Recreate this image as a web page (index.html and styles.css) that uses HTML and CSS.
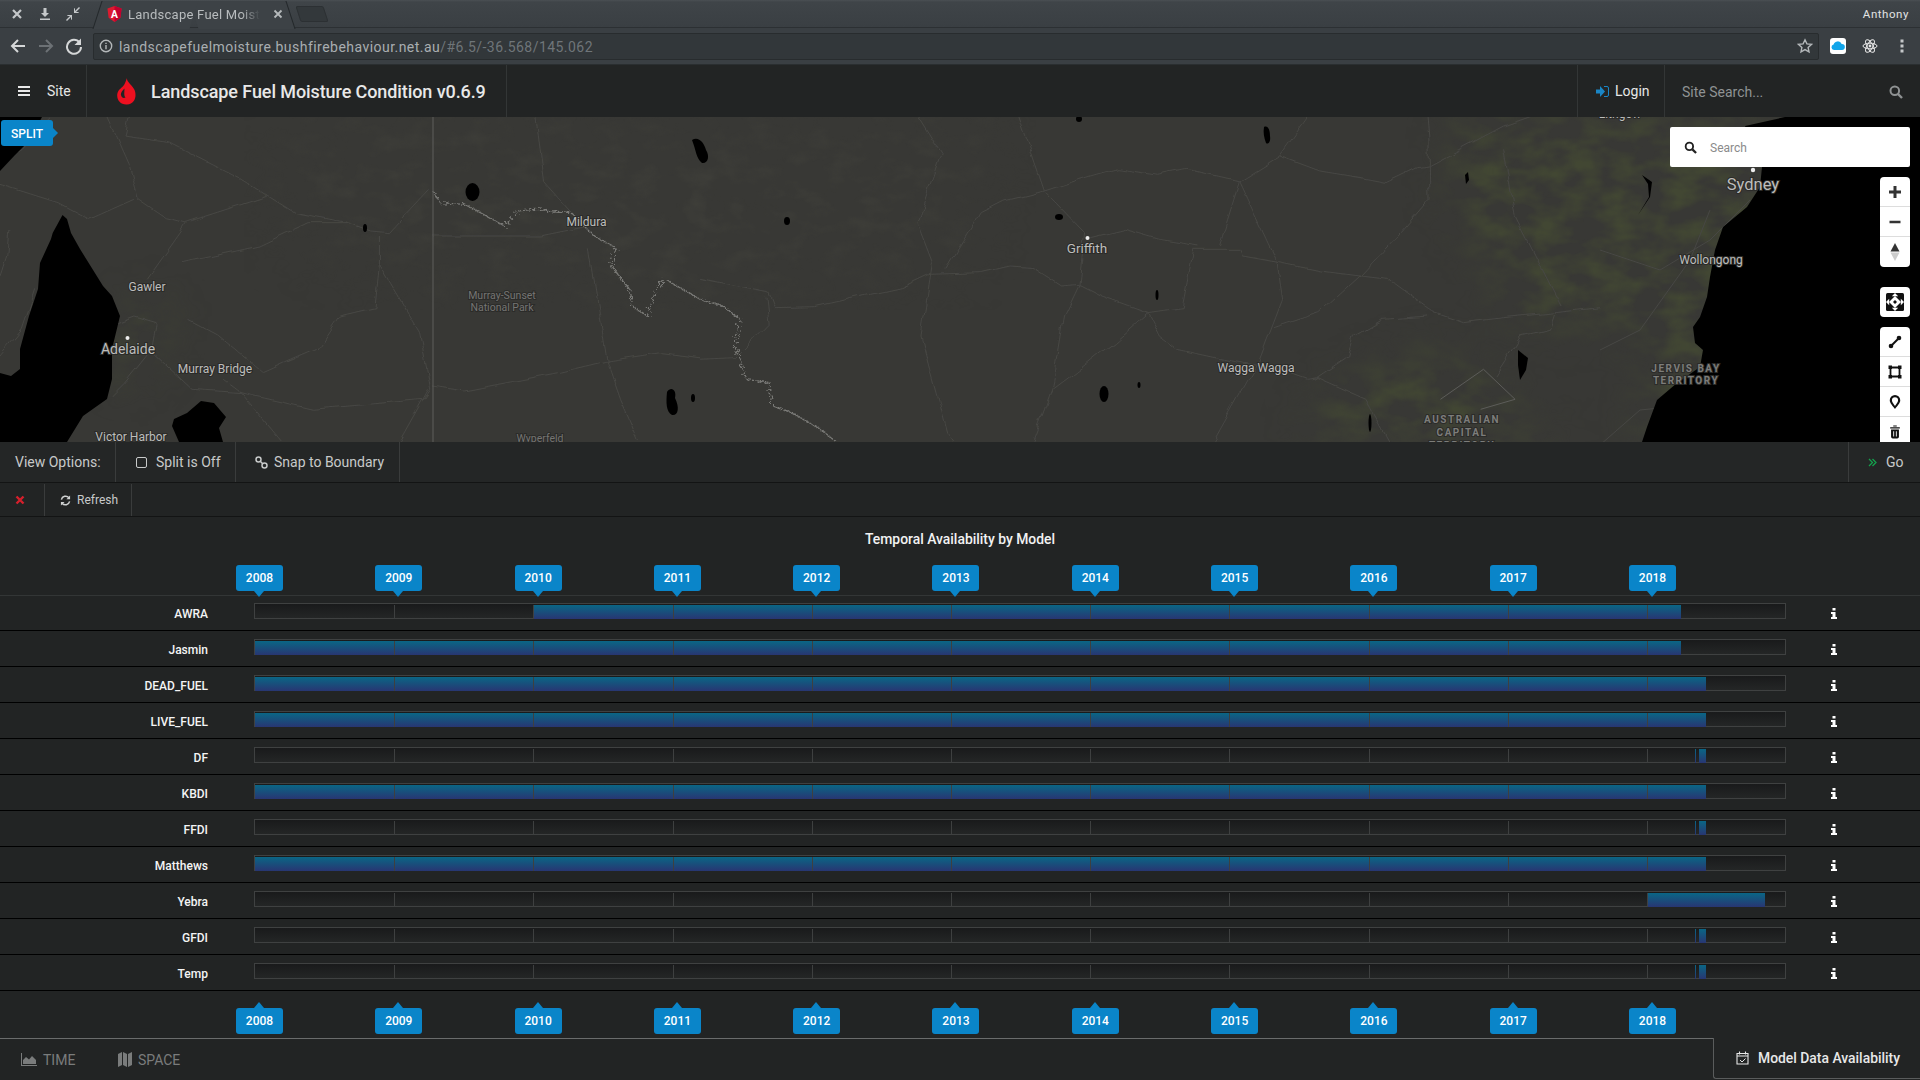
FILE: index.html
```html
<!DOCTYPE html>
<html lang="en">
<head>
<meta charset="utf-8">
<title>Landscape Fuel Moisture Condition</title>
<link rel="stylesheet" href="styles.css">
</head>
<body>
<div class="tabstrip">
  <div class="win-btns">
    <svg class="ico16" viewBox="0 0 16 16"><path d="M4 4l8 8M12 4l-8 8" stroke="#c4c7c9" stroke-width="2.2" fill="none"/></svg>
    <svg class="ico16" viewBox="0 0 16 16"><path d="M6.500 2h3v5H12l-4 4-4-4h2.500zM3 12.500h10V14H3z" fill="#c4c7c9"/></svg>
    <svg class="ico16" viewBox="0 0 16 16"><path d="M14 1L10 5V2.800L9 2v5h5l-.8-1H11l4-4zM2 15l4-4v2.200l1 .8V9H2l.8 1H5l-4 4z" fill="#c4c7c9"/></svg>
  </div>
  <div class="tab">
    <svg class="fav" viewBox="0 0 16 17"><path d="M8 0l7.500 2.600-1.200 10L8 17l-6.300-4.400-1.200-10z" fill="#dd1b2f"/><path d="M8 0l7.500 2.600-1.200 10L8 17z" fill="#c3002f"/><text x="8" y="12.500" text-anchor="middle" class="fav-a">A</text></svg>
    <span class="tab-title">Landscape Fuel Moist</span>
    <svg class="tab-x" viewBox="0 0 10 10"><path d="M1.500 1.500l7 7M8.500 1.500l-7 7" stroke="#b5b9bb" stroke-width="1.800" fill="none"/></svg>
  </div>
  <div class="newtab"></div>
  <span class="user">Anthony</span>
</div>
<div class="toolbar">
  <svg class="nav-ico" viewBox="0 0 18 18"><path d="M16 9H3M9 3L3 9l6 6" stroke="#d5d7d8" stroke-width="2" fill="none"/></svg>
  <svg class="nav-ico dim" viewBox="0 0 18 18"><path d="M2 9h13M9 3l6 6-6 6" stroke="#6c7175" stroke-width="2" fill="none"/></svg>
  <svg class="nav-ico" viewBox="0 0 18 18"><path d="M14.500 5.500A7 7 0 1 0 16 10" stroke="#d5d7d8" stroke-width="2" fill="none"/><path d="M16 1.500V8h-6.500z" fill="#d5d7d8"/></svg>
  <div class="omni">
    <svg class="info-c" viewBox="0 0 14 14"><circle cx="7" cy="7" r="5.700" stroke="#b4b8ba" stroke-width="1.400" fill="none"/><path d="M6.300 6h1.400v4.200H6.300zM6.300 3.700h1.400v1.400H6.300z" fill="#b4b8ba"/></svg>
    <span class="url">landscapefuelmoisture.bushfirebehaviour.net.au<span class="url-path">/#6.5/-36.568/145.062</span></span>
    <svg class="star" viewBox="0 0 16 16"><path d="M8 1.800l1.900 4.100 4.500.5-3.300 3 .9 4.400L8 11.600l-4 2.200.9-4.400-3.300-3 4.500-.5z" stroke="#b4b8ba" stroke-width="1.400" fill="none"/></svg>
  </div>
  <div class="ext ext-cloud"><svg viewBox="0 0 16 16"><path d="M4 12a2.800 2.800 0 0 1-.4-5.500A4.300 4.300 0 0 1 11.700 6 3 3 0 0 1 12 12z" fill="#11a5ea"/></svg></div>
  <svg class="ext ext-atom" viewBox="0 0 16 16"><g fill="none" stroke="#e8e8e8" stroke-width="1"><ellipse cx="8" cy="8" rx="7" ry="2.800"/><ellipse cx="8" cy="8" rx="7" ry="2.800" transform="rotate(60 8 8)"/><ellipse cx="8" cy="8" rx="7" ry="2.800" transform="rotate(120 8 8)"/></g><circle cx="8" cy="8" r="1.400" fill="#e8e8e8"/></svg>
  <svg class="ext ext-dots" viewBox="0 0 16 16"><path d="M6.500 1.500h3v3h-3zM6.500 6.500h3v3h-3zM6.500 11.500h3v3h-3z" fill="#c4c7c9"/></svg>
</div>

<header class="navbar">
  <div class="nav-site">
    <svg class="burger" viewBox="0 0 12 10"><path d="M0 0h12v2H0zM0 4h12v2H0zM0 8h12v2H0z" fill="#e8e8e8"/></svg>
    <span>Site</span>
  </div>
  <div class="brand">
    <svg class="flame" viewBox="0 0 20 27"><path fill-rule="evenodd" d="M10 0C9.500 4 14 6 17 11 20 16 19 26 10 26.500 3 27-1 21 .5 15 1.500 11 5 10 7 7 8.500 5 9 2 10 0zM7.500 10.500C5 13 3.500 15 4 17 4.500 19.500 6.500 20.500 8.500 19.500 6.500 17 7.500 14 7.500 10.500z" fill="#ee1020"/></svg>
    <span class="brand-title">Landscape Fuel Moisture Condition v0.6.9</span>
  </div>
  <div class="login">
    <svg class="login-ico" viewBox="0 0 13 11"><path d="M0 3.500h4V0l5 5.500-5 5.500V7.500H0z" fill="#1a86c6"/><path d="M8 .5h3a1.500 1.500 0 0 1 1.500 1.500v7A1.500 1.500 0 0 1 11 10.500H8" stroke="#1a86c6" fill="none"/></svg>
    <span>Login</span>
  </div>
  <div class="site-search">
    <span>Site Search...</span>
    <svg class="s-ico" viewBox="0 0 14 14"><circle cx="5.800" cy="5.800" r="4.300" fill="none" stroke="#8f9293" stroke-width="2"/><path d="M9 9l4 4" stroke="#8f9293" stroke-width="2.400"/></svg>
  </div>
</header>

<section class="map">
  <svg class="map-art" viewBox="0 0 1920 325" preserveAspectRatio="none">
    <defs>
      <filter id="veg" x="-10%" y="-10%" width="120%" height="120%" color-interpolation-filters="sRGB">
        <feGaussianBlur in="SourceAlpha" stdDeviation="22" result="b"/>
        <feTurbulence type="fractalNoise" baseFrequency=".03 .05" numOctaves="3" seed="4"/>
        <feColorMatrix values="0 0 0 0 .26  0 0 0 0 .28  0 0 0 0 .2  0 0 0 2.400 -.85" result="n"/>
        <feComposite in="n" in2="b" operator="in"/>
      </filter>
      <filter id="patch" x="-5%" y="-5%" width="110%" height="110%" color-interpolation-filters="sRGB">
        <feGaussianBlur in="SourceAlpha" stdDeviation="30" result="b"/>
        <feTurbulence type="fractalNoise" baseFrequency=".035 .06" numOctaves="3" seed="9"/>
        <feColorMatrix values="0 0 0 0 .245  0 0 0 0 .245  0 0 0 0 .225  0 0 0 2 -.9" result="n"/>
        <feComposite in="n" in2="b" operator="in"/>
      </filter>
      <filter id="wob" x="-3%" y="-3%" width="106%" height="106%">
        <feTurbulence type="fractalNoise" baseFrequency=".02" numOctaves="2" seed="3"/>
        <feDisplacementMap in="SourceGraphic" scale="16"/>
      </filter>
      <filter id="wig" x="-5%" y="-5%" width="110%" height="110%">
        <feTurbulence type="fractalNoise" baseFrequency=".14" numOctaves="2" seed="7"/>
        <feDisplacementMap in="SourceGraphic" scale="24"/>
      </filter>
    </defs>
    <g transform="translate(0,-117)">
      <path filter="url(#patch)" d="M300 117H1000L960 260 700 300 420 280 280 220z"/>
      <g filter="url(#veg)">
        <path d="M1460 117H1780V442H1640L1660 330 1520 320 1450 200z"/>
        <path d="M1300 442L1340 385 1440 350 1560 442z"/>
        <path d="M135 300L165 310 155 360 120 385 115 350z"/>
      </g>
      <g transform="translate(0,116) scale(.4464,.3333)">
        <g class="road" filter="url(#wob)">
          <polyline points="240,0 290,150 310,250 370,305 415,320 600,240 660,290 780,320 830,345 870,350 960,220"/>
          <polyline points="290,0 280,60 380,80 540,190 600,240"/>
          <polyline points="0,205 130,260 200,310 300,250"/>
          <polyline points="420,320 330,490"/>
          <polyline points="410,440 530,405 580,390 690,320 780,320"/>
          <polyline points="850,445 840,575 760,600 710,700 640,740 590,770 490,660 420,610"/>
          <polyline points="850,360 850,445 940,650 965,820 950,850 700,880 540,830 500,790"/>
          <polyline points="970,360 1210,360 1320,330"/>
          <polyline points="970,810 1040,825 1250,770 1360,735 1480,710 1568,725"/>
          <polyline points="1320,400 1360,735 1390,850 1430,975"/>
          <polyline points="960,820 895,975"/>
          <polyline points="1200,0 1220,200 1280,290"/>
          <polyline points="0,140 50,100 120,0"/>
          <polyline points="20,340 15,420 0,480"/>
          <polyline points="80,520 50,640 0,720"/>
          <polyline points="260,620 300,600 350,620 340,700 280,800 250,840"/>
          <polyline points="350,720 430,820 540,830 630,975"/>
        </g>
        <polyline class="river" filter="url(#wig)" points="970,225 985,260 1040,265 1090,300 1130,330 1160,285 1200,280 1280,290 1330,360 1380,395 1370,450 1410,520 1415,570 1450,600 1470,520 1490,490 1568,550"/>
      </g>
      <g transform="translate(700,116) scale(.574,.3333)">
        <g class="road" filter="url(#wob)">
          <polyline points="0,490 120,530 130,575 200,572 350,515 400,475 490,470 540,450 580,455 630,510 660,505 700,540 780,590 840,575 860,400 940,400 945,420 1010,440 1080,465 1150,480 1200,490 1280,590 1330,620 1400,605 1490,590 1568,575"/>
          <polyline points="380,0 420,110 378,320 405,440 385,660 400,760 430,950 440,975"/>
          <polyline points="555,0 600,225 670,350 660,510 635,600 615,810 580,975"/>
          <polyline points="600,225 680,180 725,158 800,178 850,160 940,195 1010,120 1080,165 1150,185 1195,200 1250,155 1268,150"/>
          <polyline points="940,195 905,390"/>
          <polyline points="940,195 1005,435 1015,550 975,730 895,975"/>
          <polyline points="1010,120 1060,0"/>
          <polyline points="680,365 740,340 800,370 870,390"/>
          <polyline points="600,225 530,255 490,290 430,460"/>
          <polyline points="780,590 800,660 830,700 910,730 1010,760 1060,790 1075,785 1160,850 1200,975"/>
          <polyline points="780,590 720,680 650,775 615,820"/>
          <polyline points="1000,635 1080,590 1150,480 1220,350 1270,250 1268,60 1265,0"/>
          <polyline points="1070,790 1130,720 1140,660 1190,610 1270,600"/>
          <polyline points="1268,150 1400,30 1450,0"/>
          <polyline points="1490,590 1480,640 1430,660 1385,780"/>
          <polyline points="1400,100 1420,300 1500,570"/>
          <polyline points="0,730 60,725 120,620 115,545"/>
        </g>
        <polyline class="river" filter="url(#wig)" points="0,550 40,570 70,610 60,690 70,730 80,790 120,800 125,870 160,890 210,940 235,975"/>
        <polyline class="act" points="1290,850 1365,760 1420,850 1360,880"/>
      </g>
      <g transform="translate(1600,150)" class="road">
        <polyline points="0,100 60,120 110,90 150,50"/>
        <polyline points="0,200 40,180 90,110 110,60"/>
        <polyline points="0,295 40,260 90,255 105,220 110,170"/>
      </g>
      <path class="border" d="M433 117V442"/>
      <g class="water">
        <path d="M0 117H42L30 140 15 155 0 171z"/>
        <path d="M62.500 215L52.700 233 51 239 40 263 38 289 29 316 20 349 20 369 11 376 0 373V442H67L83 416 107 399 112 379 112 349 120 316 112 296 103 286 80 249 71 233 67 219z"/>
        <path d="M174 419L187 413 201 401 214 403 226 417 219 428 223 442H179L172 426z"/>
        <path d="M1785 117L1745 126 1762 167 1760 187 1747 207 1723 227 1715 250 1710 277 1707 297 1700 317 1693 327 1695 343 1703 350 1700 367 1677 383 1657 400 1647 427 1642 442H1920V117z"/>
        <ellipse cx="472.500" cy="192" rx="7" ry="9"/>
        <path d="M692 140C698 136 704 142 706 150 710 156 708 164 702 163 696 158 696 150 692 140z"/>
        <path d="M1264 127C1268 125 1270 130 1270 136 1271 142 1268 145 1266 143 1264 138 1263 132 1264 127z"/>
        <ellipse cx="1079" cy="119" rx="3" ry="3"/>
        <path d="M667 392C671 386 677 390 675 398 680 408 678 416 672 415 666 412 666 402 667 392z"/>
        <ellipse cx="693" cy="398" rx="2" ry="4"/>
        <ellipse cx="1104" cy="394" rx="4.500" ry="8"/>
        <ellipse cx="1139" cy="385" rx="1.500" ry="3"/>
        <path d="M1518 350L1528 358 1526 370 1520 380 1518 365z"/>
        <ellipse cx="787" cy="221" rx="3" ry="4"/>
        <ellipse cx="1059" cy="217" rx="4" ry="3"/>
        <ellipse cx="1157" cy="295" rx="1.500" ry="5"/>
        <ellipse cx="365" cy="228" rx="2" ry="4"/>
        <ellipse cx="1370" cy="423" rx="1.500" ry="9"/>
        <path d="M1642 175L1652 182 1650 197 1638 215 1649 197 1648 184z"/>
        <path d="M1465 175l3-3 1 8-3 4z"/>
      </g>
      <circle class="dot" cx="127.500" cy="338" r="2"/>
      <circle class="dot" cx="1087.500" cy="238" r="2"/>
      <circle class="dot" cx="1753" cy="170" r="2.200"/>
      <text class="lbl" x="1620" y="118">Lithgow</text>
      <text class="lbl l17" x="1753" y="190">Sydney</text>
      <text class="lbl" x="1711" y="264">Wollongong</text>
      <text class="lbl reg" x="1686" y="371.500">JERVIS BAY</text>
      <text class="lbl reg" x="1686" y="384">TERRITORY</text>
      <text class="lbl" x="586.500" y="226">Mildura</text>
      <text class="lbl l13" x="1087" y="252.500">Griffith</text>
      <text class="lbl" x="1256" y="372">Wagga Wagga</text>
      <text class="lbl reg" x="1462" y="423">AUSTRALIAN</text>
      <text class="lbl reg" x="1462" y="436">CAPITAL</text>
      <text class="lbl reg" x="1462" y="449">TERRITORY</text>
      <text class="lbl" x="147" y="291">Gawler</text>
      <text class="lbl l14" x="128" y="354">Adelaide</text>
      <text class="lbl" x="215" y="373">Murray Bridge</text>
      <text class="lbl" x="131" y="441">Victor Harbor</text>
      <text class="lbl park" x="502" y="298.500">Murray-Sunset</text>
      <text class="lbl park" x="502" y="310.500">National Park</text>
      <text class="lbl park" x="540" y="441.500">Wyperfeld</text>
    </g>
  </svg>
  <div class="split-badge">SPLIT</div>
  <div class="map-search">
    <svg class="ms-ico" viewBox="0 0 14 14"><circle cx="5.800" cy="5.800" r="4" fill="none" stroke="#222" stroke-width="2"/><path d="M9 9l4 4" stroke="#222" stroke-width="2.400"/></svg>
    <span>Search</span>
  </div>
  <div class="ctrls">
    <div class="ctrl-group">
      <div class="ctrl"><svg viewBox="0 0 14 14"><path d="M5.500 1h3v4.500H13v3H8.500V13h-3V8.500H1v-3h4.500z" fill="#333"/></svg></div>
      <div class="ctrl"><svg viewBox="0 0 14 14"><path d="M1.500 5.700h11v2.600h-11z" fill="#333"/></svg></div>
      <div class="ctrl"><svg class="compass" viewBox="0 0 10 18"><path d="M5 0l4.500 8.500H.5z" fill="#333"/><path d="M5 18l4.500-8.500H.5z" fill="#ccc"/></svg></div>
    </div>
    <div class="ctrl-group">
      <div class="ctrl"><svg class="big" viewBox="0 0 18 18"><rect width="18" height="18" rx="1.500" fill="#111"/><path d="M9 3L15 9 9 15 3 9z" fill="#fff"/><path d="M9 0l3.200 3.200H5.800zM9 18l3.200-3.200H5.800zM0 9l3.200-3.200v6.400zM18 9l-3.200-3.200v6.400z" fill="#fff"/><path d="M9 7l2 2-2 2-2-2z" fill="#111"/></svg></div>
    </div>
    <div class="ctrl-group">
      <div class="ctrl"><svg viewBox="0 0 14 14"><path d="M3 11L11 3" stroke="#111" stroke-width="2"/><circle cx="3" cy="11" r="2.300" fill="#111"/><circle cx="11" cy="3" r="2.300" fill="#111"/></svg></div>
      <div class="ctrl"><svg viewBox="0 0 14 14"><path d="M2.500 2.500h9v9h-9z" fill="none" stroke="#111" stroke-width="1.800"/><path d="M.5.5h3.500v3.500H.5zM10 .5h3.500v3.500H10zM.5 10h3.500v3.500H.5zM10 10h3.500v3.500H10z" fill="#111"/></svg></div>
      <div class="ctrl"><svg viewBox="0 0 14 16"><path fill-rule="evenodd" d="M7 0a6 6 0 0 1 6 6c0 3.500-4 7-6 10-2-3-6-6.500-6-10a6 6 0 0 1 6-6zm0 2.500A3.500 3.500 0 0 0 3.500 6c0 2 2 4.500 3.500 6.500C8.500 10.500 10.500 8 10.500 6A3.500 3.500 0 0 0 7 2.500z" fill="#111"/></svg></div>
      <div class="ctrl"><svg viewBox="0 0 14 16"><path fill-rule="evenodd" d="M1.500 2.500h11v1.500h-11zM5 .5h4v1.200H5zM2.500 5h9v8.500a2 2 0 0 1-2 2h-5a2 2 0 0 1-2-2zM5 7v6h1V7zm3 0v6h1V7z" fill="#111"/></svg></div>
    </div>
  </div>
</section>

<div class="viewbar">
  <div class="vb-cell vb-first">View Options:</div>
  <div class="vb-cell vb-split"><span class="check"></span>Split is Off</div>
  <div class="vb-cell vb-snap">
    <svg class="link-ico" viewBox="0 0 13 13"><g fill="none" stroke="#c8caca" stroke-width="1.500"><circle cx="3.500" cy="3.500" r="2.500"/><circle cx="9.500" cy="9.500" r="2.500"/><path d="M5 5l3 3"/></g></svg>
    Snap to Boundary
  </div>
  <div class="vb-go">
    <svg class="go-ico" viewBox="0 0 9 9"><path d="M1 1l3.500 3.500L1 8M4.500 1L8 4.500 4.500 8" fill="none" stroke="#14a04c" stroke-width="1.300"/></svg>
    Go
  </div>
</div>
<div class="refreshbar">
  <div class="rb-x"><svg viewBox="0 0 10 10"><path d="M1.500 1.500l7 7M8.500 1.500l-7 7" stroke="#d5202c" stroke-width="2.400"/></svg></div>
  <div class="rb-refresh">
    <svg class="ref-ico" viewBox="0 0 12 12"><path d="M1.500 5A4.700 4.700 0 0 1 9.700 3M10.500 7A4.700 4.700 0 0 1 2.300 9" fill="none" stroke="#d0d2d2" stroke-width="1.600"/><path d="M11 .5V4.500H7zM1 11.500V7.500H5z" fill="#d0d2d2"/></svg>
    Refresh
  </div>
</div>

<main class="chart">
  <h1 class="chart-title">Temporal Availability by Model</h1>
  <div class="axis axis-top">
    <div class="yr"><span class="yr-tag">2008</span></div><div class="yr"><span class="yr-tag">2009</span></div><div class="yr"><span class="yr-tag">2010</span></div><div class="yr"><span class="yr-tag">2011</span></div><div class="yr"><span class="yr-tag">2012</span></div><div class="yr"><span class="yr-tag">2013</span></div><div class="yr"><span class="yr-tag">2014</span></div><div class="yr"><span class="yr-tag">2015</span></div><div class="yr"><span class="yr-tag">2016</span></div><div class="yr"><span class="yr-tag">2017</span></div><div class="yr"><span class="yr-tag">2018</span></div>
  </div>
  <div class="rows">
    <div class="row"><div class="model">AWRA</div><div class="track"><i class="seg" style="margin-left:278px;width:1147.700px"></i></div><svg class="inf" viewBox="0 0 6 11"><path d="M1.500 0h3v2.500h-3zM0 4h4.500v5H6v2H0V9h1.500V6H0z" fill="#fff"/></svg></div>
    <div class="row"><div class="model">Jasmin</div><div class="track"><i class="seg" style="width:1425.700px"></i></div><svg class="inf" viewBox="0 0 6 11"><path d="M1.500 0h3v2.500h-3zM0 4h4.500v5H6v2H0V9h1.500V6H0z" fill="#fff"/></svg></div>
    <div class="row"><div class="model">DEAD_FUEL</div><div class="track"><i class="seg" style="width:1451px"></i></div><svg class="inf" viewBox="0 0 6 11"><path d="M1.500 0h3v2.500h-3zM0 4h4.500v5H6v2H0V9h1.500V6H0z" fill="#fff"/></svg></div>
    <div class="row"><div class="model">LIVE_FUEL</div><div class="track"><i class="seg" style="width:1451px"></i></div><svg class="inf" viewBox="0 0 6 11"><path d="M1.500 0h3v2.500h-3zM0 4h4.500v5H6v2H0V9h1.500V6H0z" fill="#fff"/></svg></div>
    <div class="row"><div class="model">DF</div><div class="track"><i class="seg" style="margin-left:1440px;width:1px"></i><i class="seg" style="margin-left:3px;width:7px"></i></div><svg class="inf" viewBox="0 0 6 11"><path d="M1.500 0h3v2.500h-3zM0 4h4.500v5H6v2H0V9h1.500V6H0z" fill="#fff"/></svg></div>
    <div class="row"><div class="model">KBDI</div><div class="track"><i class="seg" style="width:1451px"></i></div><svg class="inf" viewBox="0 0 6 11"><path d="M1.500 0h3v2.500h-3zM0 4h4.500v5H6v2H0V9h1.500V6H0z" fill="#fff"/></svg></div>
    <div class="row"><div class="model">FFDI</div><div class="track"><i class="seg" style="margin-left:1440px;width:1px"></i><i class="seg" style="margin-left:3px;width:7px"></i></div><svg class="inf" viewBox="0 0 6 11"><path d="M1.500 0h3v2.500h-3zM0 4h4.500v5H6v2H0V9h1.500V6H0z" fill="#fff"/></svg></div>
    <div class="row"><div class="model">Matthews</div><div class="track"><i class="seg" style="width:1451px"></i></div><svg class="inf" viewBox="0 0 6 11"><path d="M1.500 0h3v2.500h-3zM0 4h4.500v5H6v2H0V9h1.500V6H0z" fill="#fff"/></svg></div>
    <div class="row"><div class="model">Yebra</div><div class="track"><i class="seg" style="margin-left:1392px;width:118px"></i></div><svg class="inf" viewBox="0 0 6 11"><path d="M1.500 0h3v2.500h-3zM0 4h4.500v5H6v2H0V9h1.500V6H0z" fill="#fff"/></svg></div>
    <div class="row"><div class="model">GFDI</div><div class="track"><i class="seg" style="margin-left:1440px;width:1px"></i><i class="seg" style="margin-left:3px;width:7px"></i></div><svg class="inf" viewBox="0 0 6 11"><path d="M1.500 0h3v2.500h-3zM0 4h4.500v5H6v2H0V9h1.500V6H0z" fill="#fff"/></svg></div>
    <div class="row"><div class="model">Temp</div><div class="track"><i class="seg" style="margin-left:1440px;width:1px"></i><i class="seg" style="margin-left:3px;width:7px"></i></div><svg class="inf" viewBox="0 0 6 11"><path d="M1.500 0h3v2.500h-3zM0 4h4.500v5H6v2H0V9h1.500V6H0z" fill="#fff"/></svg></div>
  </div>
  <div class="axis axis-bottom">
    <div class="yr"><span class="yr-tag">2008</span></div><div class="yr"><span class="yr-tag">2009</span></div><div class="yr"><span class="yr-tag">2010</span></div><div class="yr"><span class="yr-tag">2011</span></div><div class="yr"><span class="yr-tag">2012</span></div><div class="yr"><span class="yr-tag">2013</span></div><div class="yr"><span class="yr-tag">2014</span></div><div class="yr"><span class="yr-tag">2015</span></div><div class="yr"><span class="yr-tag">2016</span></div><div class="yr"><span class="yr-tag">2017</span></div><div class="yr"><span class="yr-tag">2018</span></div>
  </div>
</main>

<footer class="tabs">
  <div class="tabs-left">
    <div class="btab btab-time">
      <svg class="bt-ico" viewBox="0 0 16 13"><path d="M0 0h1v12h15v1H0z" fill="#7a7c7c"/><path d="M2 11V7l3-3 3 2.500L11 3l4 4v4z" fill="#7a7c7c"/></svg>
      TIME
    </div>
    <div class="btab btab-space">
      <svg class="bt-ico map-ico" viewBox="0 0 14 15"><path d="M0 2l4-2v13l-4 2zM5 0l4 2v13l-4-2zM10 2l4-2v13l-4 2z" fill="#7a7c7c"/></svg>
      SPACE
    </div>
  </div>
  <div class="tab-active">
    <svg class="cal-ico" viewBox="0 0 13 14"><path d="M1 2.500h11v10.500H1zM1 5h11M3.500 0.500v3M9.500 0.500v3" fill="none" stroke="#e6e6e6" stroke-width="1.100"/><path d="M4 9l2 2 3.500-3.500" fill="none" stroke="#e6e6e6" stroke-width="1"/></svg>
    Model Data Availability
  </div>
</footer>
</body>
</html>
```

FILE: styles.css
```css
* { box-sizing: border-box; }
html, body { margin: 0; padding: 0; }
body {
  width: 1920px;
  height: 1080px;
  overflow: hidden;
  background: #222424;
  font-family: Roboto, "Liberation Sans", sans-serif;
  color: #d8dada;
}

/* browser chrome */
.tabstrip {
  height: 28px;
  display: flex;
  align-items: center;
  background: linear-gradient(#4a4f53 0, #3f4448 2px, #3a3f43 100%);
  border-bottom: 1px solid #2c3033;
  padding-left: 9px;
}
.win-btns { display: flex; gap: 12px; width: 84px; }
.ico16 { width: 16px; height: 16px; }
.tab {
  position: relative;
  width: 201px;
  height: 27px;
  margin-top: 1px;
  display: flex;
  align-items: center;
  padding-left: 14px;
}
.tab::before {
  content: "";
  position: absolute;
  inset: 0 4px -1px 50%;
  background: #3d4246;
  border-right: 1px solid #23272a;
  transform: skewX(18deg);
  z-index: 0;
}
.tab::after {
  content: "";
  position: absolute;
  inset: 0 50% -1px 4px;
  transform: skewX(-18deg);
  background: #3d4246;
  border-left: 1px solid #23272a;
  z-index: 0;
}
.fav { position: relative; z-index: 1; width: 15px; height: 16px; margin-right: 6px; flex: none; }
.fav-a { font: 700 11px Roboto, sans-serif; fill: #fff; }
.tab-title {
  position: relative;
  z-index: 1;
  font-size: 13px;
  letter-spacing: .25px;
  color: #b8bcbe;
  white-space: nowrap;
  -webkit-mask-image: linear-gradient(90deg, #000 86%, transparent 100%);
  mask-image: linear-gradient(90deg, #000 86%, transparent 100%);
}
.tab-x { position: relative; z-index: 1; width: 10px; height: 10px; margin-left: 13px; margin-right: 0; }
.newtab {
  width: 28px;
  height: 16px;
  margin-left: 4px;
  background: #33383b;
  border: 1px solid #2c3033;
  border-radius: 2px;
  transform: skewX(18deg);
}
.user {
  margin-left: auto;
  margin-right: 11px;
  font-size: 11.500px;
  letter-spacing: .55px;
  color: #e2e3e4;
}
.toolbar {
  height: 37px;
  display: flex;
  align-items: center;
  background: #3a3f43;
  padding-left: 9px;
  border-bottom: 1px solid #2a2e30;
}
.nav-ico { width: 18px; height: 18px; margin-right: 10px; flex: none; }
.omni {
  width: 1726px;
  height: 27px;
  display: flex;
  align-items: center;
  background: #32373a;
  border: 1px solid #282c2e;
  border-radius: 2px;
  padding-left: 5px;
}
.info-c { width: 14px; height: 14px; margin-right: 6px; }
.url { font-size: 14px; letter-spacing: .46px; color: #a9aeb1; white-space: nowrap; padding-top: 1px; }
.url-path { color: #6f7579; }
.star { width: 16px; height: 16px; margin-left: auto; margin-right: 5px; }
.ext { flex: none; }
.ext-cloud {
  width: 16px; height: 16px;
  margin-left: 11px;
  background: #fff;
  border-radius: 3px;
}
.ext-cloud svg { display: block; width: 16px; height: 16px; }
.ext-atom { width: 16px; height: 16px; margin-left: 16px; }
.ext-dots { width: 16px; height: 16px; margin-left: 16px; }

/* nav */
.navbar {
  height: 52px;
  display: flex;
  align-items: stretch;
  background: #222424;
  color: #e6e7e7;
}
.nav-site {
  width: 87px;
  display: flex;
  align-items: center;
  padding-left: 18px;
  gap: 17px;
  font-size: 14px;
  border-right: 1px solid #333636;
}
.burger { width: 12px; height: 10px; }
.brand {
  width: 420px;
  display: flex;
  align-items: center;
  padding-left: 30px;
  border-right: 1px solid #333636;
}
.flame { width: 20px; height: 27px; margin-right: 14px; }
.brand-title { font-size: 18px; font-weight: 500; color: #e8e8e8; white-space: nowrap; letter-spacing: -.09px; }
.login {
  margin-left: auto;
  width: 88px;
  display: flex;
  align-items: center;
  padding-left: 18px;
  gap: 6px;
  font-size: 14px;
  border-left: 1px solid #333636;
  border-right: 1px solid #333636;
}
.login-ico { width: 13px; height: 11px; }
.site-search {
  width: 255px;
  display: flex;
  align-items: center;
  justify-content: space-between;
  padding: 1px 17px 0 17px;
  font-size: 14px;
  color: #8f9394;
}
.s-ico { width: 14px; height: 14px; }

/* map */
.map {
  position: relative;
  height: 325px;
  background: #383835;
  overflow: hidden;
}
.map-art { display: block; width: 1920px; height: 325px; }
.road { fill: none; stroke: #474744; stroke-width: 1px; }
.road polyline, .river, .act { vector-effect: non-scaling-stroke; }
.river { fill: none; stroke: #7a7a77; stroke-width: 1.200px; }
.act { fill: none; stroke: #5c5c59; stroke-width: 1px; }
.border { stroke: #5f5f5d; stroke-width: 1; }
.water { fill: #000; }
.dot { fill: #eee; }
.lbl {
  font-family: Roboto, sans-serif;
  font-size: 12px;
  fill: #bdbdbb;
  text-anchor: middle;
  stroke: #2b2b29;
  stroke-width: 2px;
  paint-order: stroke;
}
.l13 { font-size: 13.500px; }
.l14 { font-size: 14px; }
.l17 { font-size: 16.500px; }
.reg { font-size: 10px; font-weight: 700; letter-spacing: 1.500px; fill: #7d7d7b; }
.park { font-size: 10.500px; fill: #757573; }
.split-badge {
  position: absolute;
  left: 1px;
  top: 3px;
  width: 52px;
  height: 26px;
  background: #0a85c9;
  border-radius: 3px;
  color: #fff;
  font-size: 12px;
  font-weight: 500;
  line-height: 28px;
  padding-left: 10px;
}
.split-badge::after {
  content: "";
  position: absolute;
  right: -5px;
  top: 8px;
  border-left: 5px solid #0a85c9;
  border-top: 5px solid transparent;
  border-bottom: 5px solid transparent;
}
.map-search {
  position: absolute;
  left: 1670px;
  top: 10px;
  width: 240px;
  height: 40px;
  background: #fff;
  border-radius: 2px;
  display: flex;
  align-items: center;
  padding: 1px 0 0 14px;
  gap: 13px;
  font-size: 12px;
  color: #8a8a8a;
}
.ms-ico { width: 13px; height: 13px; }
.ctrls {
  position: absolute;
  left: 1880px;
  top: 60px;
  width: 30px;
  display: flex;
  flex-direction: column;
  gap: 20px;
}
.ctrls .ctrl-group:nth-child(3) { margin-top: -10px; }
.ctrl-group { background: #fff; border-radius: 4px; overflow: hidden; }
.ctrl {
  height: 30px;
  display: flex;
  align-items: center;
  justify-content: center;
  border-bottom: 1px solid #ddd;
}
.ctrl:last-child { border-bottom: 0; }
.ctrl svg { width: 14px; height: 14px; }
.ctrl svg.big { width: 18px; height: 18px; }
.ctrl svg.compass { width: 10px; height: 18px; }

/* option bars */
.viewbar {
  height: 41px;
  display: flex;
  align-items: stretch;
  background: #242626;
  border-bottom: 1px solid #131414;
  font-size: 14px;
  color: #c8caca;
}
.vb-cell {
  display: flex;
  align-items: center;
  border-right: 1px solid #3a3c3c;
}
.vb-first { width: 116px; padding-left: 15px; }
.vb-split { width: 120px; padding-left: 20px; gap: 9px; }
.check { width: 11px; height: 11px; border: 1px solid #c8caca; border-radius: 2px; }
.vb-snap { width: 164px; padding-left: 19px; gap: 6px; }
.link-ico { width: 13px; height: 13px; }
.vb-go {
  margin-left: auto;
  width: 72px;
  display: flex;
  align-items: center;
  padding-left: 19px;
  gap: 9px;
  border-left: 1px solid #3a3c3c;
}
.go-ico { width: 9px; height: 9px; }
.refreshbar {
  height: 34px;
  display: flex;
  align-items: stretch;
  background: #222424;
  border-bottom: 1px solid #131414;
  font-size: 12px;
  color: #c8caca;
  padding-top: 1px;
}
.rb-x {
  width: 45px;
  display: flex;
  align-items: center;
  padding-left: 15px;
  border-right: 1px solid #3a3c3c;
}
.rb-x svg { width: 10px; height: 10px; }
.rb-refresh {
  width: 87px;
  display: flex;
  align-items: center;
  padding-left: 15px;
  gap: 6px;
  border-right: 1px solid #3a3c3c;
}
.ref-ico { width: 11px; height: 11px; }

/* chart */
.chart { height: 521px; }
.chart-title {
  margin: 0;
  height: 48px;
  padding-top: 13px;
  font-size: 13.900px;
  line-height: 18px;
  font-weight: 500;
  color: #f2f2f2;
  text-align: center;
}
.axis { display: flex; padding-left: 236px; }
.axis-top { height: 30px; }
.axis-bottom { height: 47px; padding-top: 17px; }
.yr { width: 139.300px; flex: none; }
.yr-tag {
  position: relative;
  display: block;
  width: 47px;
  height: 26px;
  background: #0a85c9;
  border-radius: 3px;
  color: #fff;
  font-size: 12px;
  font-weight: 500;
  line-height: 27px;
  text-align: center;
}
.yr-tag::after {
  content: "";
  position: absolute;
  left: 18px;
  border-left: 5.500px solid transparent;
  border-right: 5.500px solid transparent;
}
.axis-top .yr-tag::after { top: 26px; border-top: 6px solid #0a85c9; }
.axis-bottom .yr-tag::after { bottom: 26px; border-bottom: 6px solid #0a85c9; }
.rows { box-shadow: inset 0 1px #333636; }
.row {
  height: 36px;
  display: flex;
  align-items: center;
  padding-bottom: 3px;
  border-bottom: 1px solid #000;
}
.model {
  width: 208px;
  padding-top: 6px;
  text-align: right;
  font-size: 12px;
  font-weight: 500;
  color: #f4f4f4;
}
.track {
  position: relative;
  width: 1532px;
  height: 16px;
  margin-left: 46px;
  padding-top: 1px;
  display: flex;
  align-items: flex-start;
  border: 1px solid #3f4141;
  background: linear-gradient(#191a1b, #242626);
}
.track::after {
  content: "";
  position: absolute;
  left: .5px;
  right: 0;
  top: 1px;
  bottom: -1px;
  background: repeating-linear-gradient(90deg, transparent 0, transparent 138.200px, #3e4040 138.200px, #3e4040 139.200px);
}
.seg {
  display: block;
  flex: none;
  height: 14px;
  background: linear-gradient(#0a6685, #283672);
}
.inf { width: 6px; height: 11px; margin-left: 45px; margin-top: 4px; }

/* bottom tabs */
.tabs {
  height: 42px;
  display: flex;
  background: #222424;
}
.tabs-left {
  width: 1713px;
  display: flex;
  align-items: center;
  border-top: 1px solid #6a6c6c;
  font-size: 14px;
  color: #7a7c7c;
}
.btab { display: flex; align-items: center; gap: 6px; }
.btab-time { margin-left: 21px; width: 97px; }
.bt-ico { width: 16px; height: 13px; }
.map-ico { width: 14px; height: 15px; }
.tab-active {
  flex: 1;
  display: flex;
  align-items: center;
  padding-left: 22px;
  gap: 9px;
  font-size: 13.900px;
  font-weight: 500;
  color: #e8e8e8;
  border-left: 1px solid #5a5c5c;
  border-bottom: 1px solid #5a5c5c;
  border-bottom-left-radius: 3px;
  height: 41px;
}
.cal-ico { width: 13px; height: 14px; }
```
